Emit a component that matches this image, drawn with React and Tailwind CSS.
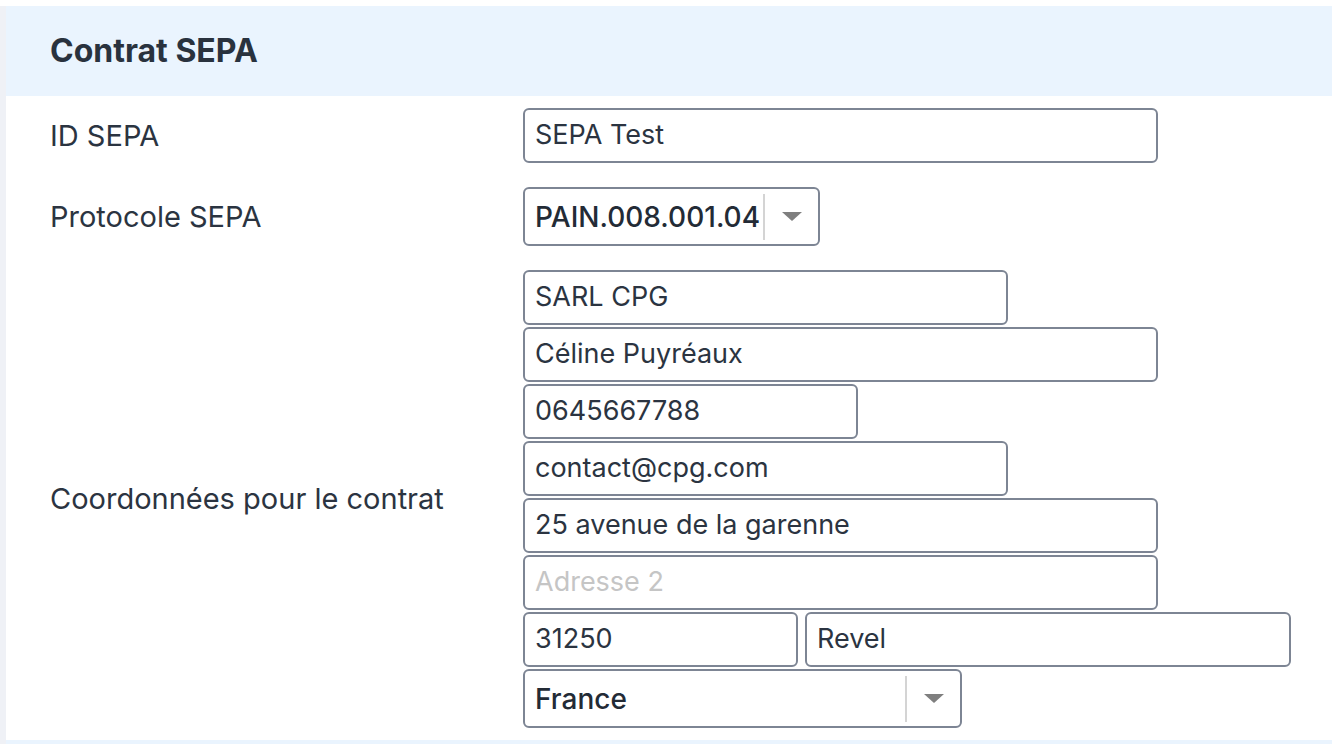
const FONT = { fontFamily: "Inter, 'Noto Sans', sans-serif" };

function Field({ width, value, placeholder }) {
  return (
    <div
      className="h-[55px] rounded-[6px] border-2 border-[#7d8594] bg-white flex items-center px-[10px] text-[27px]"
      style={{ width }}
    >
      {value ? (
        <span className="text-[#2b3441]">{value}</span>
      ) : (
        <span className="text-[#c5c5c5]">{placeholder}</span>
      )}
    </div>
  );
}

function Select({ width, value }) {
  return (
    <div
      className="h-[59px] rounded-[6px] border-2 border-[#7d8594] bg-white flex items-center"
      style={{ width }}
    >
      <span className="flex-1 pl-[10px] text-[28px] font-medium text-[#232b36] whitespace-nowrap">{value}</span>
      <div className="w-[55px] h-[46px] border-l-2 border-[#d4d4d4] flex items-center justify-center">
        <svg width="20" height="10" viewBox="0 0 20 10">
          <polygon points="0,0 20,0 10,9" fill="#7f7f7f" />
        </svg>
      </div>
    </div>
  );
}

function Row({ label, children }) {
  return (
    <div className="flex items-center py-[12px]">
      <div className="w-[517px] pl-[44px] text-[29px] text-[#2b3441]">{label}</div>
      <div>{children}</div>
    </div>
  );
}

export default function App() {
  return (
    <div className="w-[1332px] h-[744px] bg-white pt-[6px] overflow-hidden" style={FONT}>
      <div className="flex h-full">
        <div className="w-[6px] bg-[#eff1f6]" />
        <div className="flex-1 flex flex-col">
          <div className="h-[90px] bg-[#eaf4fe] flex items-center pl-[44px]">
            <h2 className="text-[32px] font-bold text-[#29323e]">Contrat SEPA</h2>
          </div>
          <Row label="ID SEPA">
            <Field width={635} value="SEPA Test" />
          </Row>
          <Row label="Protocole SEPA">
            <Select width={297} value="PAIN.008.001.04" />
          </Row>
          <Row label="Coordonnées pour le contrat">
            <div className="flex flex-col gap-[2px]">
              <Field width={485} value="SARL CPG" />
              <Field width={635} value="Céline Puyréaux" />
              <Field width={335} value="0645667788" />
              <Field width={485} value="contact@cpg.com" />
              <Field width={635} value="25 avenue de la garenne" />
              <Field width={635} placeholder="Adresse 2" />
              <div className="flex gap-[7px]">
                <Field width={275} value="31250" />
                <Field width={486} value="Revel" />
              </div>
              <Select width={439} value="France" />
            </div>
          </Row>
          <div className="flex-1 bg-[#eaf4fe]" />
        </div>
      </div>
    </div>
  );
}
